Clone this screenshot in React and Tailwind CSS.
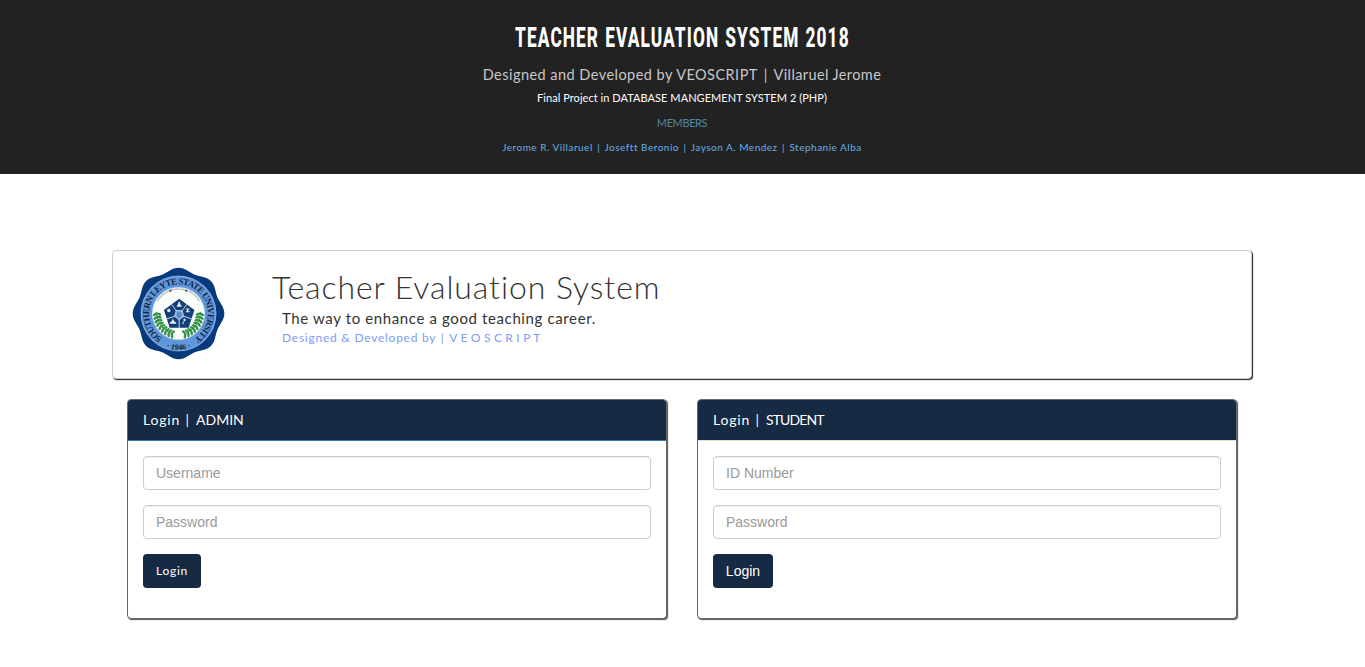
import React from "react";

const LOBES = Array.from({ length: 120 }, (_, i) => {
  const a = (i / 120) * Math.PI * 2;
  const r = 131.5 + 5.5 * Math.cos(8 * a);
  return `${(175 + r * Math.sin(a)).toFixed(1)},${(175 - r * Math.cos(a)).toFixed(1)}`;
}).join(" ");

const point = (deg, r, cx = 175, cy = 175) => {
  const a = (deg * Math.PI) / 180;
  return [cx + r * Math.sin(a), cy - r * Math.cos(a)];
};

const LEAVES = [92, 101, 110, 119, 128, 137, 146, 155, 164].map((d) => ({ d, p: point(d, 70), q: point(d, 58) }));

function Laurel() {
  return (
    <g>
      <path d="M240 170 Q240 215 192 238" fill="none" stroke="#2f8a43" strokeWidth="3" />
      {LEAVES.map(({ d, p, q }) => (
        <g key={d} fill="#2f8f42">
          <ellipse cx={p[0]} cy={p[1]} rx="3.8" ry="7.5" transform={`rotate(${d + 25} ${p[0]} ${p[1]})`} />
          <ellipse cx={q[0]} cy={q[1]} rx="3.6" ry="7" transform={`rotate(${d - 30} ${q[0]} ${q[1]})`} />
        </g>
      ))}
    </g>
  );
}

function Seal() {
  const pent = [0, 72, 144, 216, 288].map((d) => point(d, 48, 177, 179));
  return (
    <svg viewBox="36 36 278 278" className="block size-[93px]" aria-label="Southern Leyte State University">
      <defs>
        <path id="ring" d="M126.2 248.8 A88 88 0 1 1 223.8 248.8" />
        <path id="year" d="M115 266 A109 109 0 0 0 235 266" />
      </defs>
      <polygon points={LOBES} fill="#073a7c" />
      <circle cx="175" cy="175" r="112" fill="#5f97dc" stroke="#b9cfec" strokeWidth="2" />
      <circle cx="175" cy="175" r="78" fill="#fbfdfa" stroke="#dfeaf4" strokeWidth="2" />
      <text fontFamily="Liberation Serif, serif" fontWeight="700" fontSize="27" fill="#14243f">
        <textPath href="#ring" textLength="452">SOUTHERN LEYTE STATE UNIVERSITY</textPath>
      </text>
      <text fontFamily="Liberation Serif, serif" fontWeight="700" fontSize="24" fill="#14243f">
        <textPath href="#year" startOffset="50%" textAnchor="middle">· 1946 ·</textPath>
      </text>
      <path d="M112 138 A73 73 0 0 1 238 138" fill="none" stroke="#858d94" strokeWidth="4" strokeDasharray="2 1.6" />
      <circle cx="151" cy="107" r="3" fill="#26364d" />
      <circle cx="198" cy="107" r="3" fill="#26364d" />
      <Laurel />
      <g transform="translate(350 0) scale(-1 1)"><Laurel /></g>
      <polygon points={pent.map((p) => p.join(",")).join(" ")} fill="#123f79" />
      {pent.map((p, i) => (
        <line key={i} x1="177" y1="179" x2={(p[0] + pent[(i + 1) % 5][0]) / 2} y2={(p[1] + pent[(i + 1) % 5][1]) / 2} stroke="#e9f0f7" strokeWidth="2.5" />
      ))}
      <g fill="#e8eff8">
        <path d="M170 155 v-5 h3 v-5 h2 v-5 h4 v5 h2 v5 h3 v5z" />
        <circle cx="146" cy="166" r="5" />
        <path d="M197 160h11v3h-4v5h5v3h-12v-3h3v-5h-3z" />
        <path d="M158 190l4 8 6 4v4h-19v-4l6-4z" />
        <path d="M186 206l5-9-2-4 6-3 2 5-5 4-3 8z" />
      </g>
      <polygon points="177,194 163,184 168,166 186,166 191,184" fill="#79a9e0" stroke="#d9e6f4" strokeWidth="2" />
      <path d="M170 174l7-4 8 5-2 8-5 6-7-5z" fill="#5b87c4" />
    </svg>
  );
}

function Field({ placeholder, type = "text" }) {
  return (
    <input
      type={type}
      placeholder={placeholder}
      className="mb-[15px] block h-[34px] w-full rounded border border-[#ccc] bg-white px-3 py-1.5 font-['Liberation_Sans',sans-serif] text-[14px] text-[#555] shadow-[inset_0_1px_1px_rgba(0,0,0,0.075)] placeholder:text-[#999]"
    />
  );
}

function LoginPanel({ role, idLabel, ruleClass, roleClass, buttonClass }) {
  return (
    <section className="h-[220px] w-[540px] rounded border border-[#666] bg-white shadow-[1px_1px_1px_#555]">
      <h3 className={`flex h-[41px] items-center whitespace-pre rounded-t-[3px] border-b bg-[#172a43] pb-[2px] pl-[15px] text-[14px] text-white ${ruleClass}`}>
        <span className="tracking-[0.8px]">Login</span>
        <span className="ml-[5.5px] mr-[7px]">|</span>
        <span className={roleClass}>{role}</span>
      </h3>
      <form className="p-[15px]" onSubmit={(e) => e.preventDefault()}>
        <Field placeholder={idLabel} />
        <Field placeholder="Password" type="password" />
        <button className={`h-[34px] rounded bg-[#172a43] text-white ${buttonClass}`}>Login</button>
      </form>
    </section>
  );
}

const MEMBERS = ["Jerome R. Villaruel", "Joseftt Beronio", "Jayson A. Mendez", "Stephanie Alba"];

export default function App() {
  return (
    <div className="h-[667px] overflow-hidden bg-white font-['Century_Gothic',Lato,sans-serif] text-[#333]">
      <header className="flex h-[174px] flex-col items-center whitespace-nowrap bg-[#222] pr-px pt-[22px]">
        <h1 className="h-[32px] origin-center scale-x-[0.64] font-[Roboto,sans-serif] text-[27px] font-extrabold leading-[32px] tracking-[1.7px] text-white [word-spacing:1px]">
          TEACHER EVALUATION SYSTEM 2018
        </h1>
        <p className="mt-[11px] flex h-5 text-[14.5px] leading-5 text-[#c8c8c8]">
          <span className="tracking-[0.46px]">Designed and Developed by VEOSCRIPT</span>
          <span className="mx-[6px]">|</span>
          <span className="tracking-[0.4px]">Villaruel Jerome</span>
        </p>
        <p className="mt-[3px] h-5 text-[11px] leading-5 tracking-[0.05px] text-white">
          Final Project in DATABASE MANGEMENT SYSTEM 2 (PHP)
        </p>
        <p className="mt-[5px] h-5 text-[11px] leading-5 tracking-[-0.4px] text-[#5485a5]">MEMBERS</p>
        <p className="mt-[4px] flex h-5 text-[10px] leading-5 tracking-[0.5px] text-[#69b0e5]">
          {MEMBERS.map((name, i) => (
            <React.Fragment key={name}>
              {i > 0 && <span className="mx-[4.4px]">|</span>}
              <span>{name}</span>
            </React.Fragment>
          ))}
        </p>
      </header>

      <main className="ml-[112px] mt-[76px] w-[1140px]">
        <section className="flex h-[129px] whitespace-nowrap rounded border border-[#ccc] bg-white pl-[18.5px] pt-4 shadow-[1px_1px_1px_#222]">
          <Seal />
          <div className="ml-[47.5px]">
            <h2 className="mt-[2px] h-9 text-[32px] font-light leading-9 tracking-[0.92px]">Teacher Evaluation System</h2>
            <p className="ml-[10px] mt-[3px] h-5 text-[15px] leading-5 tracking-[0.62px]">The way to enhance a good teaching career.</p>
            <p className="ml-[10px] mt-px flex h-4 text-[12px] leading-[17px] text-[#7c9cf5]">
              <span className="tracking-[0.75px]">Designed &amp; Developed by</span>
              <span className="ml-[4.5px] mr-[5.5px]">|</span>
              <span className="tracking-[0.2px]">V E O S C R I P T</span>
            </p>
          </div>
        </section>
        <div className="mt-5 flex gap-[30px] px-[15px]">
          <LoginPanel
            role="ADMIN"
            idLabel="Username"
            ruleClass="border-[#337ab7]"
            roleClass="tracking-[0px]"
            buttonClass="w-[58px] text-[12px] tracking-[0.7px]"
          />
          <LoginPanel
            role="STUDENT"
            idLabel="ID Number"
            ruleClass="border-[#d6e9c6]"
            roleClass="tracking-[-0.9px]"
            buttonClass="w-[60px] font-['Liberation_Sans',sans-serif] text-[14px]"
          />
        </div>
      </main>
    </div>
  );
}
